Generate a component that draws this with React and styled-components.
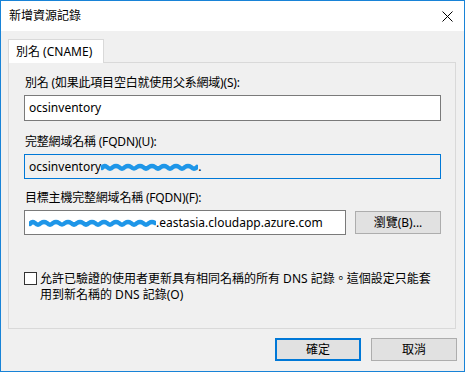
import styled, { createGlobalStyle } from 'styled-components';

const GlobalStyle = createGlobalStyle`
    html, body {
        margin: 0;
        padding: 0;
        background: #f0f0f0;
    }
    * {
        box-sizing: border-box;
    }
`

const Window = styled.div`
    width: 465px;
    height: 372px;
    border: 1px solid #1883d7;
    background: #f0f0f0;
    display: flex;
    flex-direction: column;
    font-family: "Noto Sans", "Noto Sans CJK TC", sans-serif;
    font-size: 12px;
    color: #000;
`
const TitleBar = styled.div`
    height: 30px;
    background: #fff;
    display: flex;
    align-items: center;
    justify-content: space-between;
    padding-left: 8px;
    padding-right: 8px;
    flex-shrink: 0;
`
const Title = styled.span`
    font-size: 12px;
    line-height: 16px;
`
const CloseBtn = styled.div`
    width: 12px;
    height: 12px;
    display: flex;
    align-items: center;
    justify-content: center;
    margin-right: 3px;
`
const Body = styled.div`
    flex: 1;
    display: flex;
    flex-direction: column;
    padding: 8px 7px 0 7px;
`
const TabStrip = styled.div`
    display: flex;
    height: 23px;
    position: relative;
    z-index: 1;
`
const Tab = styled.div`
    width: 96px;
    height: 24px;
    background: #fff;
    border: 1px solid #d9d9d9;
    border-bottom: 0;
    padding-left: 7px;
    display: flex;
    align-items: center;
    line-height: 16px;
`
const Panel = styled.div`
    width: 448px;
    height: 267px;
    border: 1px solid #d9d9d9;
    background: #f0f0f0;
    padding: 12px 14px 0 15px;
    display: flex;
    flex-direction: column;
`
const Label = styled.div`
    line-height: 16px;
    padding-left: 1px;
    margin-top: ${props => props.top || 0}px;
    margin-bottom: 4px;
    white-space: nowrap;
    letter-spacing: -0.2px;
`
const Field = styled.div`
    height: ${props => props.h || 25}px;
    width: ${props => props.w || 417}px;
    background: ${props => props.readOnly ? '#f0f0f0' : '#fff'};
    border: 1px solid ${props => props.readOnly ? '#0078d7' : '#7a7a7a'};
    display: flex;
    align-items: center;
    padding-left: 4px;
    line-height: 16px;
    white-space: nowrap;
    overflow: hidden;
    flex-shrink: 0;
`
const Row = styled.div`
    display: flex;
    align-items: center;
    gap: 9px;
`
const Button = styled.div`
    width: ${props => props.w || 86}px;
    height: 23px;
    background: #e1e1e1;
    border: ${props => props.primary ? '2px solid #0078d7' : '1px solid #adadad'};
    display: flex;
    align-items: center;
    justify-content: center;
    line-height: 16px;
    flex-shrink: 0;
`
const CheckRow = styled.div`
    display: flex;
    align-items: flex-start;
    margin-top: 36px;
    gap: 3px;
`
const CheckBox = styled.div`
    width: 13px;
    height: 13px;
    border: 1px solid #333;
    background: #fff;
    margin-top: 1px;
    flex-shrink: 0;
`
const CheckText = styled.div`
    width: 398px;
    line-height: 16px;
`
const Footer = styled.div`
    display: flex;
    justify-content: flex-end;
    gap: 10px;
    margin-top: 9px;
`

const Scribble = ({width}) => (
    <svg width={width} height="10" viewBox={`0 0 ${width} 10`} style={{flexShrink: 0}}>
        <path
            d={`M1 6 ${Array.from({length: Math.floor(width / 6)}, (_, i) => `Q${i * 6 + 3} ${i % 2 ? 8 : 3} ${i * 6 + 6} 5`).join(' ')}`}
            fill="none"
            stroke="#1e96e8"
            strokeWidth="4.5"
            strokeLinecap="round"
        />
    </svg>
)

const App = () => {
    return(
        <>
            <GlobalStyle/>
            <Window>
                <TitleBar>
                    <Title>新增資源記錄</Title>
                    <CloseBtn>
                        <svg width="11" height="11" viewBox="0 0 11 11">
                            <path d="M0.5 0.5 L10.5 10.5 M10.5 0.5 L0.5 10.5" stroke="#000" strokeWidth="1"/>
                        </svg>
                    </CloseBtn>
                </TitleBar>
                <Body>
                    <TabStrip>
                        <Tab>別名 (CNAME)</Tab>
                    </TabStrip>
                    <Panel>
                        <Label>別名 (如果此項目空白就使用父系網域)(S):</Label>
                        <Field h={26}>ocsinventory</Field>
                        <Label top={13}>完整網域名稱 (FQDN)(U):</Label>
                        <Field readOnly>
                            ocsinventory
                            <Scribble width={97}/>
                            .
                        </Field>
                        <Label top={11}>目標主機完整網域名稱 (FQDN)(F):</Label>
                        <Row>
                            <Field w={322} h={25}>
                                <Scribble width={127}/>
                                .eastasia.cloudapp.azure.com
                            </Field>
                            <Button w={86}>瀏覽(B)...</Button>
                        </Row>
                        <CheckRow>
                            <CheckBox/>
                            <CheckText>允許已驗證的使用者更新具有相同名稱的所有 DNS 記錄。這個設定只能套用到新名稱的 DNS 記錄(O)</CheckText>
                        </CheckRow>
                    </Panel>
                    <Footer>
                        <Button primary>確定</Button>
                        <Button>取消</Button>
                    </Footer>
                </Body>
            </Window>
        </>
    )
}

export default App;
